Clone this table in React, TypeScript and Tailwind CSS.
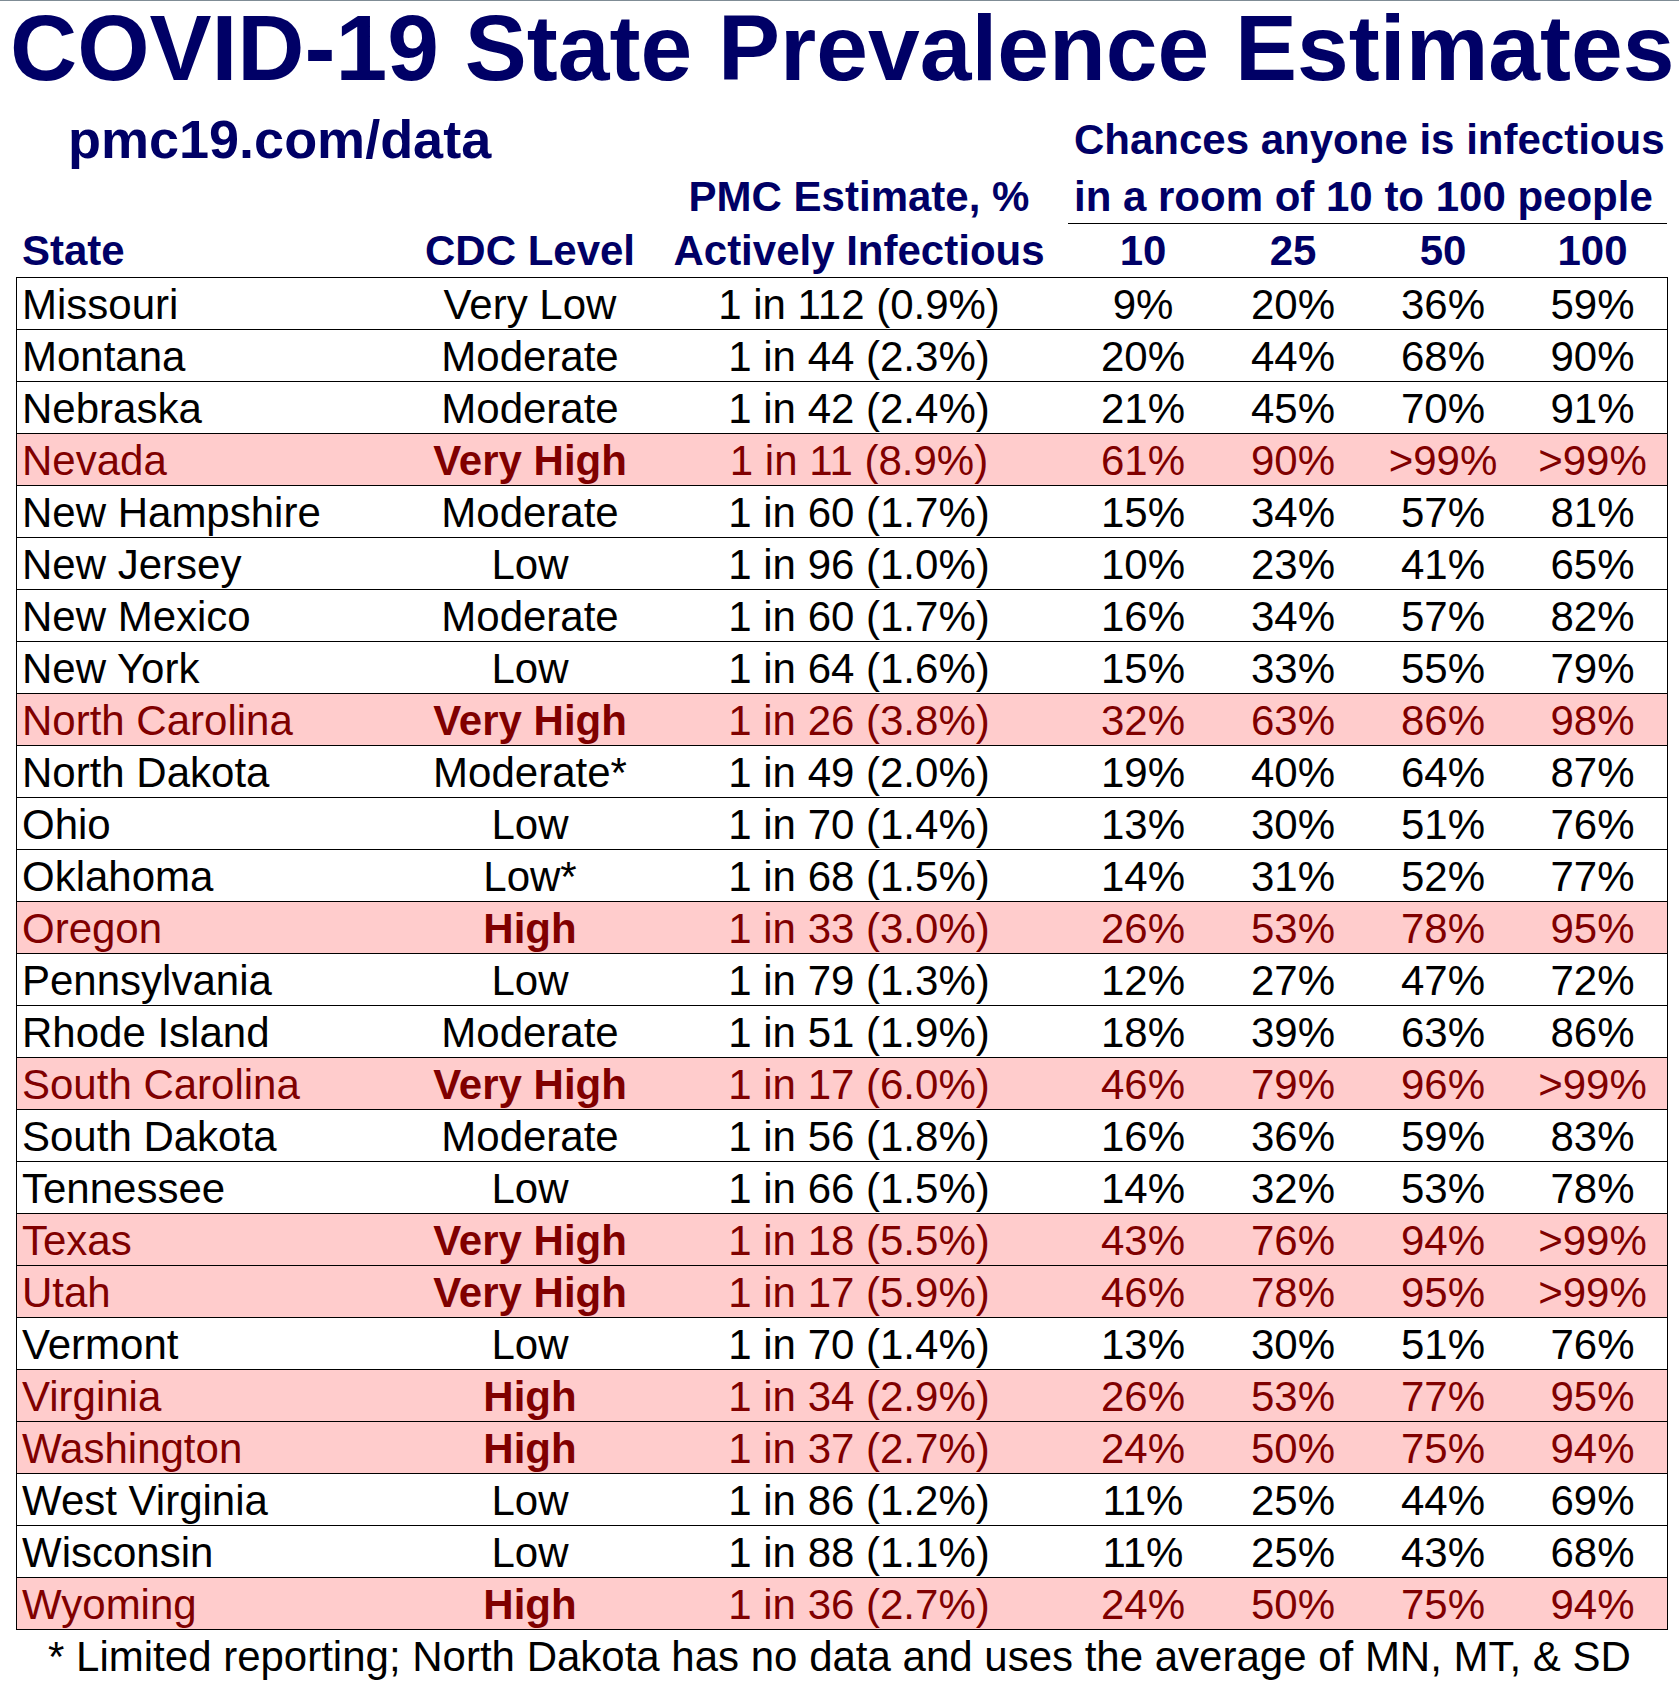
import React from 'react';

interface Row {
  state: string;
  level: string;
  est: string;
  p10: string;
  p25: string;
  p50: string;
  p100: string;
}

const rows: Row[] = [
  { state: 'Missouri', level: 'Very Low', est: '1 in 112 (0.9%)', p10: '9%', p25: '20%', p50: '36%', p100: '59%' },
  { state: 'Montana', level: 'Moderate', est: '1 in 44 (2.3%)', p10: '20%', p25: '44%', p50: '68%', p100: '90%' },
  { state: 'Nebraska', level: 'Moderate', est: '1 in 42 (2.4%)', p10: '21%', p25: '45%', p50: '70%', p100: '91%' },
  { state: 'Nevada', level: 'Very High', est: '1 in 11 (8.9%)', p10: '61%', p25: '90%', p50: '>99%', p100: '>99%' },
  { state: 'New Hampshire', level: 'Moderate', est: '1 in 60 (1.7%)', p10: '15%', p25: '34%', p50: '57%', p100: '81%' },
  { state: 'New Jersey', level: 'Low', est: '1 in 96 (1.0%)', p10: '10%', p25: '23%', p50: '41%', p100: '65%' },
  { state: 'New Mexico', level: 'Moderate', est: '1 in 60 (1.7%)', p10: '16%', p25: '34%', p50: '57%', p100: '82%' },
  { state: 'New York', level: 'Low', est: '1 in 64 (1.6%)', p10: '15%', p25: '33%', p50: '55%', p100: '79%' },
  { state: 'North Carolina', level: 'Very High', est: '1 in 26 (3.8%)', p10: '32%', p25: '63%', p50: '86%', p100: '98%' },
  { state: 'North Dakota', level: 'Moderate*', est: '1 in 49 (2.0%)', p10: '19%', p25: '40%', p50: '64%', p100: '87%' },
  { state: 'Ohio', level: 'Low', est: '1 in 70 (1.4%)', p10: '13%', p25: '30%', p50: '51%', p100: '76%' },
  { state: 'Oklahoma', level: 'Low*', est: '1 in 68 (1.5%)', p10: '14%', p25: '31%', p50: '52%', p100: '77%' },
  { state: 'Oregon', level: 'High', est: '1 in 33 (3.0%)', p10: '26%', p25: '53%', p50: '78%', p100: '95%' },
  { state: 'Pennsylvania', level: 'Low', est: '1 in 79 (1.3%)', p10: '12%', p25: '27%', p50: '47%', p100: '72%' },
  { state: 'Rhode Island', level: 'Moderate', est: '1 in 51 (1.9%)', p10: '18%', p25: '39%', p50: '63%', p100: '86%' },
  { state: 'South Carolina', level: 'Very High', est: '1 in 17 (6.0%)', p10: '46%', p25: '79%', p50: '96%', p100: '>99%' },
  { state: 'South Dakota', level: 'Moderate', est: '1 in 56 (1.8%)', p10: '16%', p25: '36%', p50: '59%', p100: '83%' },
  { state: 'Tennessee', level: 'Low', est: '1 in 66 (1.5%)', p10: '14%', p25: '32%', p50: '53%', p100: '78%' },
  { state: 'Texas', level: 'Very High', est: '1 in 18 (5.5%)', p10: '43%', p25: '76%', p50: '94%', p100: '>99%' },
  { state: 'Utah', level: 'Very High', est: '1 in 17 (5.9%)', p10: '46%', p25: '78%', p50: '95%', p100: '>99%' },
  { state: 'Vermont', level: 'Low', est: '1 in 70 (1.4%)', p10: '13%', p25: '30%', p50: '51%', p100: '76%' },
  { state: 'Virginia', level: 'High', est: '1 in 34 (2.9%)', p10: '26%', p25: '53%', p50: '77%', p100: '95%' },
  { state: 'Washington', level: 'High', est: '1 in 37 (2.7%)', p10: '24%', p25: '50%', p50: '75%', p100: '94%' },
  { state: 'West Virginia', level: 'Low', est: '1 in 86 (1.2%)', p10: '11%', p25: '25%', p50: '44%', p100: '69%' },
  { state: 'Wisconsin', level: 'Low', est: '1 in 88 (1.1%)', p10: '11%', p25: '25%', p50: '43%', p100: '68%' },
  { state: 'Wyoming', level: 'High', est: '1 in 36 (2.7%)', p10: '24%', p25: '50%', p50: '75%', p100: '94%' },
];

const cols = 'grid grid-cols-[393px_240px_418px_150px_150px_150px_149px]';

const TableRow = ({ row, last }: { row: Row; last: boolean }) => {
  const hot = row.level === 'High' || row.level === 'Very High';
  return (
    <div
      className={`${cols} text-[42px] leading-[54px] whitespace-nowrap ${
        hot ? 'bg-[#ffcccc] text-[#800000]' : 'text-black'
      } ${last ? 'h-[51px]' : 'h-[52px] border-b border-black'}`}
    >
      <div className="pl-[5px]">{row.state}</div>
      <div className={`text-center ${hot ? 'font-bold' : ''}`}>{row.level}</div>
      <div className="text-center">{row.est}</div>
      <div className="text-center">{row.p10}</div>
      <div className="text-center">{row.p25}</div>
      <div className="text-center">{row.p50}</div>
      <div className="text-center">{row.p100}</div>
    </div>
  );
};

export default function App() {
  return (
    <div
      className="w-[1679px] min-h-[1685px] bg-white border-t border-[#7f8c95]"
      style={{ fontFamily: '"Liberation Sans", Arial, sans-serif' }}
    >
      {/* Title */}
      <h1 className="pl-[10px] text-[93px] leading-[94px] font-bold text-[#000066] whitespace-nowrap">
        COVID-19 State Prevalence Estimates
      </h1>

      <div className="ml-[16px] w-[1652px] text-[#000066] font-bold whitespace-nowrap">
        {/* Link + chances line */}
        <div className={`${cols} mt-[24px] border-x border-transparent`}>
          <div className="col-span-3 -mt-[7px] pl-[51px] text-[54px] leading-none">pmc19.com/data</div>
          <div className="col-span-4 pl-[6px] text-[42px] leading-none">Chances anyone is infectious</div>
        </div>

        {/* Second header line */}
        <div className={`${cols} mt-[10px] border-x border-transparent`}>
          <div className="col-span-2" />
          <div className="text-center text-[42px] leading-none">PMC Estimate, %</div>
          <div className="col-span-4 pl-[6px] pb-[5px] text-[42px] leading-none border-b border-black">
            in a room of 10 to 100 people
          </div>
        </div>

        {/* Column headings */}
        <div className={`${cols} mt-[6px] mb-[5px] text-[42px] leading-none border-x border-transparent`}>
          <div className="pl-[5px]">State</div>
          <div className="text-center">CDC Level</div>
          <div className="text-center">Actively Infectious</div>
          <div className="text-center">10</div>
          <div className="text-center">25</div>
          <div className="text-center">50</div>
          <div className="text-center">100</div>
        </div>
      </div>

      {/* Table */}
      <div className="ml-[16px] w-[1652px] border border-black">
        {rows.map((row, i) => (
          <TableRow key={row.state} row={row} last={i === rows.length - 1} />
        ))}
      </div>

      <p className="mt-[6px] w-full text-center text-[42px] leading-none text-black whitespace-nowrap">
        * Limited reporting; North Dakota has no data and uses the average of MN, MT, &amp; SD
      </p>
    </div>
  );
}
